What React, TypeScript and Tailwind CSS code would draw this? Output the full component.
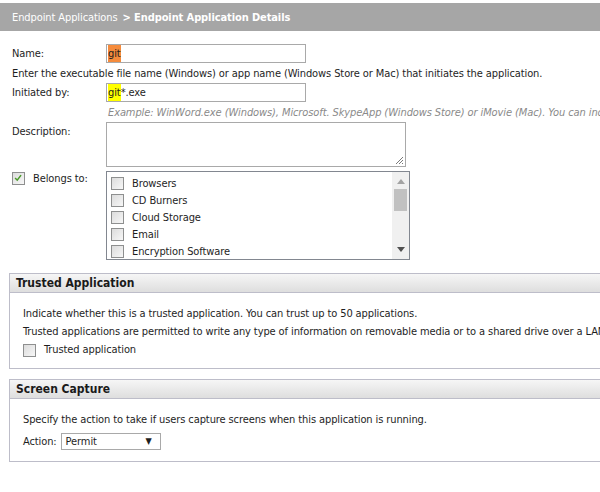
import React from "react";

const categories = ["Browsers", "CD Burners", "Cloud Storage", "Email", "Encryption Software"];

function Box({ checked = false }: { checked?: boolean }) {
	return (
		<span className="relative inline-flex w-[13px] h-[13px] shrink-0 border border-[#8e8f8f] bg-gradient-to-br from-[#dcdcdc] to-[#f7f7f7]">
			{checked && (
				<svg viewBox="0 0 13 13" className="absolute inset-0 w-[11px] h-[11px]">
					<path d="M2.5 6 L5 8.5 L9.5 2.5" fill="none" stroke="#4a9a2a" strokeWidth="1.8" />
				</svg>
			)}
		</span>
	);
}

function Section({ title, children }: { title: string; children: React.ReactNode }) {
	return (
		<div className="ml-[9px] border border-r-0 border-[#bdbdc9]">
			<div className="h-[19px] flex items-center px-[6px] bg-gradient-to-b from-[#f6f6f6] to-[#dedede] border-b border-[#bdbdc9]">
				<span className="text-[12px] font-bold text-[#1a1a1a] tracking-normal">{title}</span>
			</div>
			{children}
		</div>
	);
}

export default function App() {
	return (
		<div className="w-[600px] h-[492px] overflow-hidden bg-white text-[11px] tracking-[-0.1px] text-[#1e1e1e] font-['DejaVu_Sans_Condensed','DejaVu_Sans',sans-serif] leading-[17px]">
			{/* breadcrumb bar */}
			<div className="mt-[3px] h-[28px] bg-[#a6a6a6] flex items-center px-[12px] text-white whitespace-nowrap">
				<span>Endpoint Applications</span>
				<span className="ml-[5px] font-bold">&gt; Endpoint Application Details</span>
			</div>

			<div className="pl-[12px] pt-[13px] whitespace-nowrap">
				<div className="flex items-center h-[19px]">
					<span className="w-[94px]">Name:</span>
					<div className="w-[200px] h-[19px] border border-[#a9a9a9] flex items-center px-[1px]">
						<span className="bg-[#f58b3c]">git</span>
					</div>
				</div>
				<div className="h-[20px] flex items-center">
					Enter the executable file name (Windows) or app name (Windows Store or Mac) that initiates the application.
				</div>
				<div className="flex items-center h-[19px]">
					<span className="w-[94px]">Initiated by:</span>
					<div className="w-[200px] h-[19px] border border-[#a9a9a9] flex items-center px-[1px]">
						<span className="bg-[#ffff00]">git</span>
						<span>*.exe</span>
					</div>
				</div>
				<div className="h-[20px] flex items-center pl-[96px] italic text-[#8a8a8a]">
					Example: WinWord.exe (Windows), Microsoft. SkypeApp (Windows Store) or iMovie (Mac). You can include wildcards.
				</div>
				<div className="flex items-start">
					<span className="w-[94px] pt-[1px]">Description:</span>
					<div className="w-[300px] h-[45px] border border-[#a9a9a9] relative">
						<svg viewBox="0 0 10 10" className="absolute right-[1px] bottom-[1px] w-[10px] h-[10px]">
							<path d="M9 2 L2 9 M9 5 L5 9 M9 8 L8 9" stroke="#7a7a7a" strokeWidth="1" />
						</svg>
					</div>
				</div>
				<div className="flex items-start mt-[4px]">
					<div className="w-[94px] flex items-center gap-[8px] h-[14px]">
						<Box checked />
						<span>Belongs to:</span>
					</div>
					<div className="w-[304px] h-[89px] border border-[#828790] flex">
						<div className="flex-1 pt-[3px] pl-[4px]">
							{categories.map((c) => (
								<div key={c} className="h-[17px] flex items-center gap-[8px]">
									<Box />
									<span>{c}</span>
								</div>
							))}
						</div>
						<div className="w-[17px] bg-[#f0f0f0] flex flex-col items-center">
							<svg viewBox="0 0 8 5" className="w-[8px] h-[5px] mt-[7px]">
								<path d="M0 5 L4 0 L8 5 Z" fill="#a3a3a3" />
							</svg>
							<div className="w-[13px] h-[22px] bg-[#c1c1c1] mt-[5px]" />
							<div className="flex-1" />
							<svg viewBox="0 0 8 5" className="w-[8px] h-[5px] mb-[7px]">
								<path d="M0 0 L8 0 L4 5 Z" fill="#505050" />
							</svg>
						</div>
					</div>
				</div>
			</div>

			<div className="mt-[13px]">
				<Section title="Trusted Application">
					<div className="pl-[13px] pt-[12px] pb-[9px] whitespace-nowrap leading-[18px]">
						<div>Indicate whether this is a trusted application. You can trust up to 50 applications.</div>
						<div>Trusted applications are permitted to write any type of information on removable media or to a shared drive over a LAN.</div>
						<div className="flex items-center gap-[8px]">
							<Box />
							<span>Trusted application</span>
						</div>
					</div>
				</Section>
			</div>

			<div className="mt-[10px]">
				<Section title="Screen Capture">
					<div className="pl-[13px] pt-[11px] pb-[11px] whitespace-nowrap">
						<div className="h-[18px] flex items-center">
							Specify the action to take if users capture screens when this application is running.
						</div>
						<div className="flex items-center gap-[4px] mt-[5px]">
							<span>Action:</span>
							<div className="w-[100px] h-[17px] border border-[#a9a9a9] flex items-center justify-between pl-[4px] pr-[8px]">
								<span>Permit</span>
								<span className="text-[9px]">▼</span>
							</div>
						</div>
					</div>
				</Section>
			</div>
		</div>
	);
}
